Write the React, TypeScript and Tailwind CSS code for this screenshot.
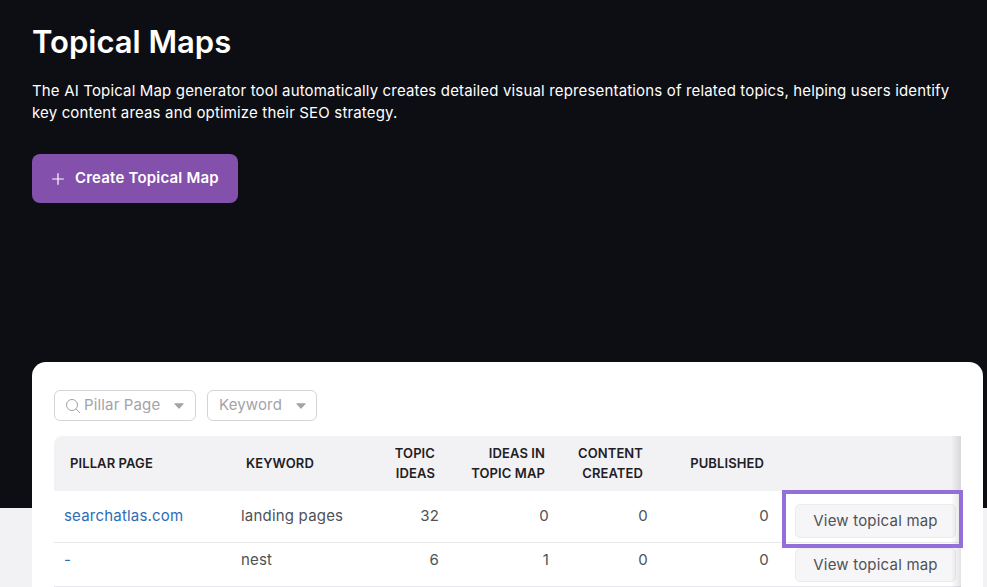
import React from "react";

const grid = "grid grid-cols-[176px_155px_64px_110px_99px_121px_182px]";

function Caret() {
  return (
    <svg width="10" height="6" viewBox="0 0 10 6" className="shrink-0">
      <path d="M.8.2h8.4a.5.5 0 0 1 .4.85L5.4 5.5a.6.6 0 0 1-.8 0L.4 1.05A.5.5 0 0 1 .8.2z" fill="#a3a3a8" />
    </svg>
  );
}

function Row({ page, keyword, a, b, c, d, highlight, tall }: { page: string; keyword: string; a: string; b: string; c: string; d: string; highlight?: boolean; tall?: boolean }) {
  const pad = tall ? "pt-[15px]" : "pt-[7px]";
  return (
    <div className={`relative ${grid} ${tall ? "h-[52px]" : "h-[44px]"} border-b border-[#e8e8ec] text-[15px] leading-[20px] tracking-[0.2px] text-[#4e5156]`}>
      <div className={`pl-[10px] text-[#2d6cb5] ${pad}`}>{page}</div>
      <div className={`pl-[11px] ${pad}`}>{keyword}</div>
      <div className={`pr-[10px] text-right ${pad}`}>{a}</div>
      <div className={`pr-[10px] text-right ${pad}`}>{b}</div>
      <div className={`pr-[10px] text-right ${pad}`}>{c}</div>
      <div className={`pr-[10px] text-right ${pad}`}>{d}</div>
      <div className={`relative pl-[16px] ${tall ? "pt-[13px]" : "pt-[5px]"}`}>
        <div className="flex h-[34px] w-[161px] items-center justify-center rounded-[5px] border border-[#ececf0] bg-[#f6f6f8] text-[15px] tracking-[0.2px] text-[#4e5156]">
          View topical map
        </div>
      </div>
      {highlight && <div className="pointer-events-none absolute left-[728px] top-[-1px] z-10 h-[58px] w-[181px] border-[4px] border-[#9370d8]" />}
    </div>
  );
}

export default function App() {
  return (
    <div className="h-[587px] w-[987px] overflow-hidden bg-[#f2f2f5] font-['Inter',sans-serif]">
      <div className="h-[508px] bg-[#0d0e13] px-8 pt-[23px] text-white">
        <h1 className="text-[31px] font-semibold leading-[38px]">Topical Maps</h1>
        <p className="mt-[19px] w-[930px] text-[15px] leading-[22px] tracking-[0.16px]">
          The AI Topical Map generator tool automatically creates detailed visual representations of related topics, helping users identify key content areas and optimize their SEO strategy.
        </p>
        <button className="mt-[30px] flex h-[49px] w-[206px] items-center rounded-[8px] bg-[#8350ab] pl-[18px] text-[15px] font-semibold tracking-[0.2px] text-white">
          <svg width="16" height="16" viewBox="0 0 16 16" className="mr-[9px]" fill="none" stroke="#ffffff" strokeWidth="1.2">
            <path d="M8 2.2v11.6M2.2 8h11.6" />
          </svg>
          Create Topical Map
        </button>
      </div>
      <div className="-mt-[146px] ml-8 mr-1 h-[300px] rounded-t-[14px] bg-white pl-[22px] pr-[22px] pt-[28px]">
        <div className="flex gap-[11px]">
          <div className="flex h-[31px] w-[142px] items-center rounded-[6px] border border-[#d4d4d8] pl-[10px] pr-[11px] text-[15px] tracking-[0.15px] text-[#a3a3a8]">
            <svg width="16" height="16" viewBox="0 0 16 16" fill="none" stroke="#a3a3a8" strokeWidth="1" className="mr-[3px] shrink-0">
              <circle cx="7" cy="7" r="5.5" />
              <path d="M11 11l4 4" />
            </svg>
            <span className="flex-1">Pillar Page</span>
            <Caret />
          </div>
          <div className="flex h-[31px] w-[110px] items-center rounded-[6px] border border-[#d4d4d8] pl-[11px] pr-[10px] text-[15px] tracking-[0.15px] text-[#a3a3a8]">
            <span className="flex-1">Keyword</span>
            <Caret />
          </div>
        </div>
        <div className="relative mt-[15px] w-[907px]">
          <div className={`${grid} h-[55px] items-center rounded-tl-[8px] bg-[#f2f2f5] pb-[1px] text-[13px] font-semibold leading-[20px] tracking-[0.1px] text-[#1f2024]`}>
            <div className="pl-4">PILLAR PAGE</div>
            <div className="pl-4">KEYWORD</div>
            <div className="pr-[14px] text-right">TOPIC<br />IDEAS</div>
            <div className="pr-[14px] text-right">IDEAS IN<br />TOPIC MAP</div>
            <div className="pr-[15px] text-right">CONTENT<br />CREATED</div>
            <div className="pr-[15px] text-right">PUBLISHED</div>
            <div />
          </div>
          <Row page="searchatlas.com" keyword="landing pages" a="32" b="0" c="0" d="0" tall highlight />
          <Row page="-" keyword="nest" a="6" b="1" c="0" d="0" />
          <div className="pointer-events-none absolute bottom-0 right-0 top-0 w-[10px] bg-gradient-to-r from-transparent to-[#0000001c]" />
        </div>
      </div>
    </div>
  );
}
